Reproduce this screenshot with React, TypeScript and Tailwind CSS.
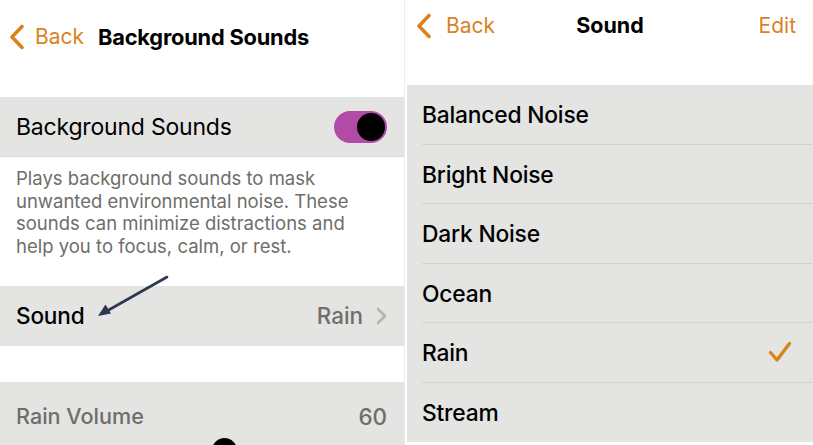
import React from 'react';

const ORANGE = '#d9831f';

const BackChevron: React.FC = () => (
  <svg width="16" height="26" viewBox="0 0 16 26" className="shrink-0">
    <polyline points="13,2.5 3,13 13,23.5" fill="none" stroke={ORANGE} strokeWidth="3.6" strokeLinecap="round" strokeLinejoin="round" />
  </svg>
);

const sounds = ['Balanced Noise', 'Bright Noise', 'Dark Noise', 'Ocean', 'Rain', 'Stream'];

export default function App() {
  return (
    <div
      className="w-[813px] h-[445px] flex bg-white overflow-hidden text-black"
      style={{ fontFamily: 'Inter, "Noto Sans", sans-serif' }}
    >
      {/* Left screen */}
      <div className="w-[405px] shrink-0 flex flex-col border-r border-[#ececec]">
        <div className="h-[97px] shrink-0">
          <div className="h-[74px] flex items-center pl-[9px]">
            <BackChevron />
            <span className="ml-[10px] text-[21px] text-[#d9831f]">Back</span>
            <span className="ml-[14px] text-[21.8px] font-bold tracking-[-0.2px]">Background Sounds</span>
          </div>
        </div>

        <div className="h-[60px] shrink-0 bg-[#e4e4e3] border-b border-[#d9d9d7] flex items-center justify-between pl-4 pr-[17px]">
          <span className="text-[23px] tracking-[-0.2px] translate-y-[1px]">Background Sounds</span>
          <div className="w-[53px] h-[32px] rounded-full bg-[#b24aa6] flex items-center justify-end pr-[2px]">
            <div className="w-[28px] h-[28px] rounded-full bg-black" />
          </div>
        </div>

        <div className="h-[129px] shrink-0 pl-4 pr-[26px] pt-[10px] text-[18.5px] leading-[22.6px] text-[#6e6e6a]">
          Plays background sounds to mask unwanted environmental noise. These sounds can minimize distractions and help you to focus, calm, or rest.
        </div>

        <div className="relative h-[60px] shrink-0 bg-[#e4e4e3] flex items-center justify-between pl-4 pr-[17px]">
          <span className="text-[22.6px] font-medium tracking-[-0.2px]">Sound</span>
          <div className="flex items-center gap-[13px]">
            <span className="text-[22.4px] text-[#6e6e6a] font-medium">Rain</span>
            <svg width="11" height="18" viewBox="0 0 11 18">
              <polyline points="2,2 9,9 2,16" fill="none" stroke="#b3b3b0" strokeWidth="2.6" strokeLinecap="round" strokeLinejoin="round" />
            </svg>
          </div>
          <svg
            width="80"
            height="50"
            viewBox="0 0 80 50"
            className="absolute left-[92px] top-[-13px]"
          >
            <line x1="75" y1="4" x2="14" y2="38.5" stroke="#2c3a4f" strokeWidth="2.6" strokeLinecap="round" />
            <polygon points="6,43 13.5,31.5 19,40.5" fill="#2c3a4f" />
          </svg>
        </div>

        <div className="h-[36px] shrink-0" />

        <div className="relative flex-1 bg-[#e4e4e3] flex items-start justify-between pl-4 pr-[17px] pt-[18px]">
          <span className="text-[21.6px] text-[#6e6e6a] font-medium">Rain Volume</span>
          <span className="text-[22.4px] text-[#6e6e6a] font-medium">60</span>
          <div className="absolute left-[212px] top-[56px] w-[25px] h-[25px] rounded-full bg-black" />
        </div>
      </div>

      {/* Right screen */}
      <div className="flex-1 ml-[2px] flex flex-col">
        <div className="h-[85px] shrink-0">
          <div className="h-[51px] flex items-center justify-between pl-[9px] pr-[17px] relative">
            <div className="flex items-center">
              <BackChevron />
              <span className="ml-[14px] text-[21px] text-[#d9831f]">Back</span>
            </div>
            <span className="absolute left-0 right-0 text-center text-[21.5px] font-bold pointer-events-none">Sound</span>
            <span className="text-[21px] text-[#d9831f]">Edit</span>
          </div>
        </div>

        <div className="bg-[#e4e4e3] flex flex-col">
          {sounds.map((s, i) => (
            <div key={s} className="h-[59.5px] pl-[15px] flex">
              <div
                className={`flex-1 flex items-center justify-between pr-[21px] ${
                  i < sounds.length - 1 ? 'border-b border-[#d3d3d1]' : ''
                }`}
              >
                <span className="text-[22.8px] font-medium tracking-[-0.2px] translate-y-[1px]">{s}</span>
                {s === 'Rain' && (
                  <svg width="24" height="22" viewBox="0 0 24 22">
                    <polyline points="2.5,11.5 9,19 21.5,2.5" fill="none" stroke={ORANGE} strokeWidth="3.4" strokeLinecap="round" strokeLinejoin="round" />
                  </svg>
                )}
              </div>
            </div>
          ))}
        </div>
        <div className="flex-1" />
      </div>
    </div>
  );
}
